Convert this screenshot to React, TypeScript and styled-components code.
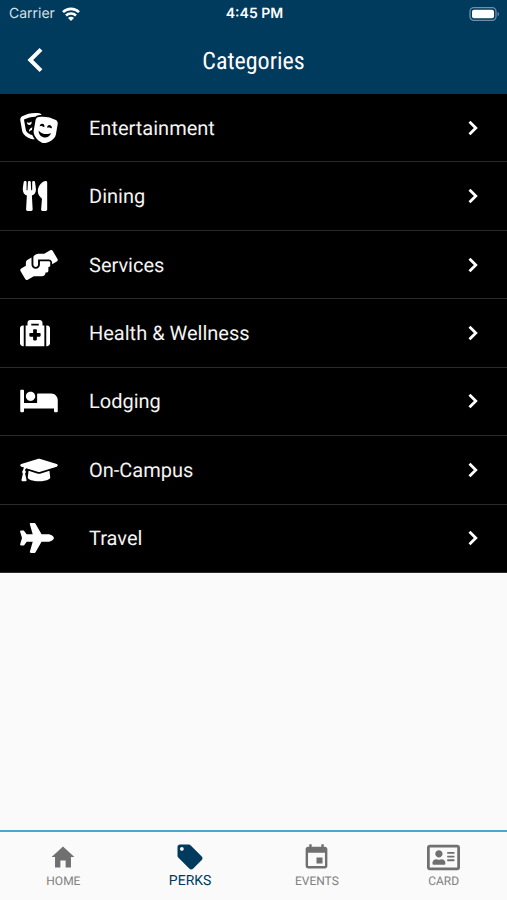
import React from "react";
import styled, { createGlobalStyle } from "styled-components";
import {
  FaBed,
  FaGraduationCap,
  FaHandsHelping,
  FaMedkit,
  FaPlane,
  FaRegAddressCard,
  FaTheaterMasks,
  FaUtensils,
} from "react-icons/fa";
import { IoMdHome } from "react-icons/io";
import { MdEvent, MdLocalOffer } from "react-icons/md";
import type { IconType } from "react-icons";

const navy = "#003a5d";

const GlobalStyle = createGlobalStyle`
  * { box-sizing: border-box; }
  body {
    margin: 0;
    background: #fafafa;
    font-family: Roboto, "Liberation Sans", sans-serif;
    text-rendering: geometricPrecision;
  }
`;

const Screen = styled.div`
  display: flex;
  flex-direction: column;
  min-height: 100vh;
`;

const Header = styled.header`
  background: ${navy};
  color: #fff;
`;

const StatusBar = styled.div`
  display: grid;
  grid-template-columns: 1fr auto 1fr;
  align-items: center;
  height: 27px;
  padding: 0 7px 0 9px;
  font: 400 14px/20px Inter, sans-serif;
`;

const Carrier = styled.span`
  display: flex;
  align-items: center;
  gap: 7px;
  color: #d5e0e8;
`;

const Clock = styled.time`
  font-weight: 600;
`;

const Battery = styled.svg`
  justify-self: end;
`;

const TitleBar = styled.div`
  display: grid;
  grid-template-columns: 72px 1fr 72px;
  align-items: center;
  height: 67px;
`;

const BackButton = styled.button`
  display: flex;
  align-items: center;
  justify-content: center;
  height: 48px;
  padding: 0 2px 2px 0;
  border: 0;
  background: none;
  color: inherit;
  cursor: pointer;
`;

const Title = styled.h1`
  margin: 0;
  font: 400 24px/32px "Roboto Condensed", Roboto, sans-serif;
  text-align: center;
`;

const CategoryList = styled.ul`
  display: grid;
  grid-auto-rows: 1fr;
  min-height: 479px;
  margin: 0;
  padding: 0;
  list-style: none;
  background: #000;
`;

const CategoryItem = styled.li`
  display: flex;
  border-bottom: 1px solid #2b2b2b;
`;

const CategoryLink = styled.a`
  flex: 1;
  display: grid;
  grid-template-columns: 69px 1fr auto;
  align-items: center;
  padding: 0 29px 0 20px;
  color: #f4f4f4;
  font-size: 20px;
  line-height: 28px;
  text-decoration: none;
`;

const Glyph = styled.span<{ $width: number }>`
  display: flex;
  color: #fff;

  svg {
    width: ${(p) => p.$width}px;
    height: 30px;
  }
`;

const Spacer = styled.main`
  flex: 1;
`;

const TabBar = styled.nav`
  display: grid;
  grid-template-columns: repeat(4, 1fr);
  height: 70px;
  border-top: 2px solid #4aa5d0;
  background: #fafafa;
`;

const Tab = styled.a`
  display: flex;
  flex-direction: column;
  align-items: center;
  padding-top: 11px;
  text-decoration: none;
`;

const TabIcon = styled.span<{ $size: number; $active?: boolean }>`
  display: flex;
  align-items: center;
  height: 28px;
  color: ${(p) => (p.$active ? navy : "#707070")};

  svg {
    width: ${(p) => p.$size}px;
    height: ${(p) => p.$size}px;
  }
`;

const TabLabel = styled.span<{ $active?: boolean }>`
  font-size: ${(p) => (p.$active ? 14 : 12)}px;
  line-height: 20px;
  color: ${(p) => (p.$active ? navy : "#808080")};
`;

const categories: { label: string; icon: IconType; width: number }[] = [
  { label: "Entertainment", icon: FaTheaterMasks, width: 38 },
  { label: "Dining", icon: FaUtensils, width: 30 },
  { label: "Services", icon: FaHandsHelping, width: 38 },
  { label: "Health & Wellness", icon: FaMedkit, width: 30 },
  { label: "Lodging", icon: FaBed, width: 38 },
  { label: "On-Campus", icon: FaGraduationCap, width: 38 },
  { label: "Travel", icon: FaPlane, width: 34 },
];

const tabs: { label: string; icon: IconType; size: number; active?: boolean }[] = [
  { label: "HOME", icon: IoMdHome, size: 28 },
  { label: "PERKS", icon: MdLocalOffer, size: 30, active: true },
  { label: "EVENTS", icon: MdEvent, size: 29 },
  { label: "CARD", icon: FaRegAddressCard, size: 33 },
];

export default function App() {
  return (
    <>
      <GlobalStyle />
      <Screen>
        <Header>
          <StatusBar>
            <Carrier>
              Carrier
              <svg width="18" height="14" viewBox="0 0 18 14" fill="none" stroke="#fff" strokeWidth="2.6" aria-hidden="true">
                <path d="M1 5.1a11.5 11.5 0 0 1 16 0" />
                <path d="M4 8.5a7.2 7.2 0 0 1 10 0" />
                <path d="M9 14 6 11a4.2 4.2 0 0 1 6 0z" fill="#fff" stroke="none" />
              </svg>
            </Carrier>
            <Clock>4:45 PM</Clock>
            <Battery width="31" height="14" viewBox="0 0 31 14" aria-hidden="true">
              <rect x="1" y="0.7" width="26" height="12.6" rx="3.8" fill="none" stroke="#6f91a7" strokeWidth="1.3" />
              <rect x="3" y="2.7" width="22" height="8.6" rx="2" fill="#fff" />
              <path d="M28.6 5v4.2c1.9-.7 1.9-3.5 0-4.2z" fill="#6f91a7" />
            </Battery>
          </StatusBar>
          <TitleBar>
            <BackButton aria-label="Back">
              <svg width="16" height="26" viewBox="0 0 16 26" fill="none" stroke="#fff" strokeWidth="4" aria-hidden="true">
                <path d="M14 2.3 3.3 13 14 23.7" />
              </svg>
            </BackButton>
            <Title>Categories</Title>
          </TitleBar>
        </Header>
        <CategoryList>
          {categories.map(({ label, icon: Icon, width }) => (
            <CategoryItem key={label}>
              <CategoryLink href="#">
                <Glyph $width={width}>
                  <Icon aria-hidden="true" />
                </Glyph>
                {label}
                <svg width="10" height="16" viewBox="0 0 10 16" fill="none" stroke="#fff" strokeWidth="2.8" aria-hidden="true">
                  <path d="m1.5 1.7 6.3 6.3-6.3 6.3" />
                </svg>
              </CategoryLink>
            </CategoryItem>
          ))}
        </CategoryList>
        <Spacer />
        <TabBar>
          {tabs.map(({ label, icon: Icon, size, active }) => (
            <Tab key={label} href="#" aria-current={active ? "page" : undefined}>
              <TabIcon $size={size} $active={active}>
                <Icon aria-hidden="true" />
              </TabIcon>
              <TabLabel $active={active}>{label}</TabLabel>
            </Tab>
          ))}
        </TabBar>
      </Screen>
    </>
  );
}
